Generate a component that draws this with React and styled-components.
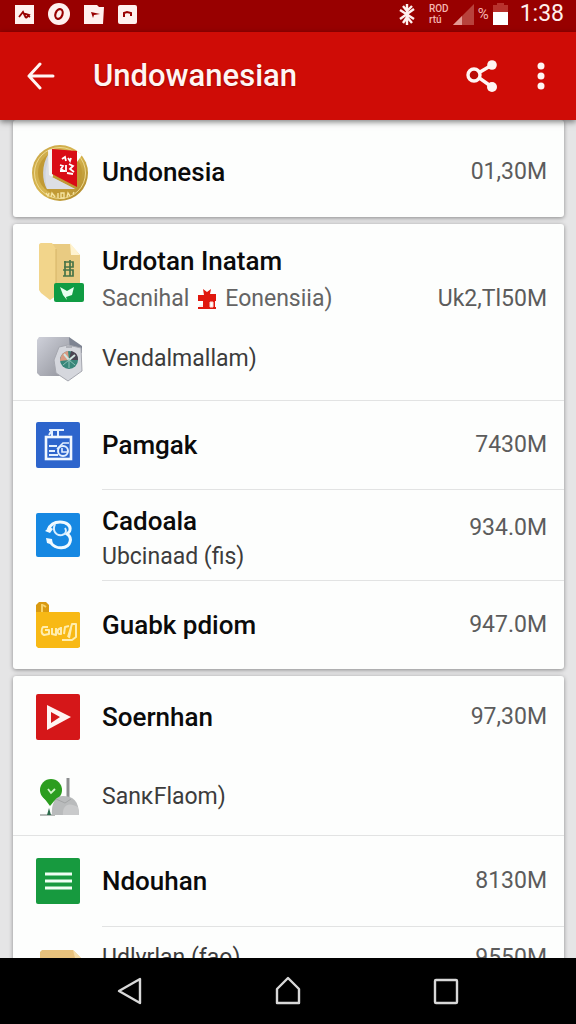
import React from "react";
import styled, { createGlobalStyle } from "styled-components";

const GlobalStyle = createGlobalStyle`
  * {
    box-sizing: border-box;
  }
  body {
    margin: 0;
    background: #e5e5e6;
    font-family: Roboto, "Noto Sans", sans-serif;
  }
  button {
    display: flex;
    align-items: center;
    justify-content: center;
    padding: 0;
    border: 0;
    background: none;
    cursor: pointer;
  }
  svg {
    display: block;
  }
`;

const Screen = styled.div`
  display: flex;
  flex-direction: column;
  height: 100vh;
  overflow: hidden;
`;

const StatusBar = styled.div`
  display: flex;
  flex: none;
  align-items: center;
  justify-content: space-between;
  height: 32px;
  padding: 0 12px 4px 14px;
  background: #980000;
  color: #ffeeec;
`;

const StatusGroup = styled.div`
  display: flex;
  align-items: center;
  gap: ${(props) => props.$gap}px;
`;

const Carrier = styled.div`
  margin-left: 8px;
  font-size: 10px;
  font-weight: 500;
  line-height: 11px;
  color: #f3b5b0;
`;

const Percent = styled.span`
  font-size: 15px;
  color: #f3b5b0;
`;

const Clock = styled.time`
  margin-left: 8px;
  font-size: 23px;
  line-height: 28px;
`;

const AppBar = styled.header`
  display: flex;
  flex: none;
  align-items: center;
  height: 88px;
  padding: 0 14px 0 20px;
  background: #cf0c06;
  color: #fff5f3;
  box-shadow: 0 2px 6px rgba(0, 0, 0, 0.5);
  z-index: 1;
`;

const BarButton = styled.button`
  width: ${(props) => props.$width}px;
  height: 48px;
  color: inherit;
`;

const Title = styled.h1`
  flex: 1;
  margin: 0 0 0 31px;
  font-size: 31px;
  font-weight: 500;
  line-height: 40px;
  text-shadow: 0 1px 2px rgba(90, 0, 0, 0.5);
`;

const Content = styled.main`
  flex: 1;
  min-height: 0;
  padding: 0 12px 0 13px;
  overflow: hidden;
`;

const Card = styled.section`
  margin-bottom: 7px;
  border-radius: 3px;
  background: #fdfefd;
  box-shadow: 0 1px 4px rgba(0, 0, 0, 0.4);
`;

const Row = styled.div`
  display: grid;
  grid-template-columns: 67px 1fr auto;
  align-items: ${(props) => (props.$top ? "start" : "center")};
  height: ${(props) => props.$height}px;
  padding: ${(props) => props.$top || 0}px 17px 0 22px;
`;

const Divider = styled.hr`
  height: 1px;
  margin: 0 0 0 ${(props) => (props.$inset ? 89 : 0)}px;
  border: 0;
  background: #e2e3e3;
`;

const TwoLines = styled.div`
  padding-top: ${(props) => props.$top || 0}px;
`;

const Name = styled.div`
  font-size: 26px;
  font-weight: 500;
  line-height: ${(props) => props.$line || 38}px;
  color: #0b0b0b;
  white-space: nowrap;
`;

const Detail = styled.div`
  display: flex;
  align-items: center;
  gap: 8px;
  font-size: 23px;
  line-height: ${(props) => props.$line || 38}px;
  color: ${(props) => (props.$dark ? "#3c3c3c" : "#646464")};
  white-space: nowrap;
`;

const Amount = styled.div`
  align-self: ${(props) => props.$align || "center"};
  font-size: 23px;
  line-height: ${(props) => props.$line || 38}px;
  color: #5c5c5c;
`;

const Medal = styled.svg`
  margin-left: -4px;
`;

const NavBar = styled.nav`
  display: flex;
  flex: none;
  justify-content: center;
  height: 66px;
  background: #000;
  z-index: 1;
`;

const NavButton = styled.button`
  flex: 1;
  max-width: 158px;
`;

const MedalIcon = () => (
  <Medal width="58" height="60" viewBox="0 0 58 60">
    <defs>
      <linearGradient id="gold" x1="0" y1="0" x2="1" y2="1">
        <stop offset="0" stopColor="#c9a648" />
        <stop offset="0.5" stopColor="#d8b64f" />
        <stop offset="1" stopColor="#a98225" />
      </linearGradient>
    </defs>
    <circle cx="29" cy="30" r="28" fill="url(#gold)" />
    <circle cx="29" cy="30" r="25.500" fill="none" stroke="#eed98f" />
    <circle cx="29" cy="30" r="22" fill="#c19a35" />
    <path d="M18 10C10 22 11 38 16 46h28L20 34z" fill="#cfd3dc" />
    <path d="M18 7l3 1v26l23 12H16c-2-8-2-18 0-24z" fill="#dcdee4" />
    <path d="M17 7l5-1v28l-4-2z" fill="#f7f4f3" />
    <path d="M21 6l25 2v36L21 31z" fill="#d90c16" />
    <path d="M46 8l5 4-5 7z" fill="#fff" />
    <path
      d="M31 16l3-2 1 4M37 15l2 3 1-3M29 22l3 1-2 3 3 2M35 22v7M38 21l4 2-3 3 4 3M29 28h5M36 30l6 1"
      fill="none"
      stroke="#fff"
      strokeWidth="1.800"
    />
    <path
      d="M15 50l2 3 1-3M20 54l1-4 3 4M27 50v5M30 50h3v5h-3zM36 54l1-4 2 3M42 51l1-2"
      fill="none"
      stroke="#f5e3a0"
      strokeWidth="1.400"
    />
  </Medal>
);

const FolderIcon = () => (
  <svg width="50" height="60" viewBox="0 0 50 60">
    <path d="M6 2h29l10 11v36H6z" fill="#e9cb82" />
    <path d="M4 3c0-1 1-2 2-2h11l4 6v47l-6 4-9-7-2-3z" fill="#f2d58b" />
    <path d="M21 7v44" stroke="#d6b467" />
    <path d="M35 1l10 12H36z" fill="#fff3cf" />
    <path
      d="M30 19v15M35 18v16M29 20h9v5h-9M28 28h10v6h-10"
      fill="none"
      stroke="#477448"
      strokeWidth="1.700"
    />
    <rect x="19" y="41" width="30" height="19" rx="2" fill="#109c43" />
    <path d="M25 45l7 4 7-4-2 8-6 2 1 3-4-5z" fill="#e8fff0" />
  </svg>
);

const ShieldIcon = () => (
  <svg width="48" height="46" viewBox="0 0 48 46">
    <defs>
      <linearGradient id="silver" x1="0" y1="0" x2="1" y2="1">
        <stop offset="0" stopColor="#cfd1da" />
        <stop offset="1" stopColor="#8e9098" />
      </linearGradient>
    </defs>
    <path d="M4 1h30l3 5v34H5l-3-3V4z" fill="url(#silver)" />
    <path d="M34 1l13 9v7H35z" fill="#7e8492" />
    <path d="M24 11l9-2 13 3 1 23-14 10-12-8-2-13z" fill="#d5d7dd" stroke="#a5a7af" />
    <circle cx="34" cy="24" r="9" fill="#39877a" />
    <path d="M34 24l-9 1c0-5 3-9 8-10z" fill="#d99a82" />
    <path d="M34 24l2-9c5 1 7 4 7 9z" fill="#4b4453" />
    <path d="M29 18l5 6 6-5" fill="none" stroke="#cfe5df" strokeWidth="2" />
    <path d="M34 23v9M28 29l6-5 6 5" fill="none" stroke="#8fc2b7" />
    <path d="M31 11h6" stroke="#8a8c94" />
  </svg>
);

const CaseIcon = () => (
  <svg width="46" height="48" viewBox="0 0 46 48">
    <rect x="1" y="1" width="44" height="46" rx="2" fill="#2d65cc" />
    <path d="M14 9h15M17 9v7M23 9v7M14 14l3-5" fill="none" stroke="#e3f0ff" strokeWidth="2" />
    <rect x="11" y="16" width="25" height="22" fill="none" stroke="#f1f8ff" strokeWidth="2.600" />
    <path d="M14 25h8M14 30h6M14 34h9" stroke="#e3f0ff" strokeWidth="2" />
    <circle cx="28" cy="30" r="5" fill="none" stroke="#e3f0ff" strokeWidth="2" />
    <path d="M22 28l6-6h6M27 27v4h5" fill="none" stroke="#e3f0ff" strokeWidth="1.600" />
  </svg>
);

const SyncIcon = () => (
  <svg width="46" height="46" viewBox="0 0 46 46">
    <rect x="1" y="1" width="44" height="44" rx="2" fill="#1688e2" />
    <path
      d="M13 18c2-5 6-8 12-8 7 0 11 4 10 8 0 2-2 3-3 4 3 2 4 5 3 8-2 7-14 8-19 1"
      fill="none"
      stroke="#f0faff"
      strokeWidth="3"
    />
    <path d="M20 12c-3 7 1 12 7 11 4-1 5-4 3-7" fill="none" stroke="#d9efff" strokeWidth="2" />
    <path d="M10 19l5-4 3 2-3 4zM11 26l6 1 1 6-6-2z" fill="#f0faff" />
  </svg>
);

const YellowFolderIcon = () => (
  <svg width="46" height="48" viewBox="0 0 46 48">
    <path d="M1 13V4l3-3h7l3 3v9z" fill="#d99a12" />
    <path d="M7 3v8M8 4l3 2" stroke="#f8d36a" strokeWidth="2" />
    <path d="M1 11h43l1 1v34l-2 1H3l-2-2z" fill="#f8b915" />
    <path
      d="M13 26H8c-2 2-2 7 1 8l5-1v-4h-4M17 27v6l4 1V27M26 27c-5 1-4 7 0 6v-7M29 33l1-7 4-1M33 36l4-13h4v13l-4 3H27M36 27l-2 10"
      fill="none"
      stroke="#ffedae"
      strokeWidth="2"
      strokeLinejoin="round"
    />
  </svg>
);

const PlayIcon = () => (
  <svg width="46" height="48" viewBox="0 0 46 48">
    <rect x="1" y="1" width="44" height="46" rx="2" fill="#d51719" />
    <path d="M12 12l24 12-24 13zM16 19v11l9-6z" fill="#fff4f2" fillRule="evenodd" />
  </svg>
);

const TreeIcon = () => (
  <svg width="46" height="40" viewBox="0 0 46 40">
    <path d="M5 38h15" stroke="#b6bab8" strokeWidth="2" />
    <path d="M14 31l2 7h-4z" fill="#2b6b4b" />
    <circle cx="16" cy="13" r="11" fill="#2c9d1f" />
    <path d="M6 17l9 12 10-12z" fill="#2c9d1f" />
    <path d="M13 12l3 4 4-4" fill="none" stroke="#d3f5ca" strokeWidth="1.800" />
    <path d="M33 1v19" stroke="#8d8f90" strokeWidth="3" />
    <path d="M17 38c-1-11 3-19 11-19 10 0 16 5 16 19z" fill="#b9bbbc" />
    <path d="M28 38c-1-9 5-14 15-8l1 8z" fill="#c9cacb" />
    <path d="M21 22l9 4 6-4" fill="none" stroke="#a3a5a6" />
  </svg>
);

const ListIcon = () => (
  <svg width="46" height="48" viewBox="0 0 46 48">
    <rect x="1" y="1" width="44" height="46" rx="2" fill="#179a3f" />
    <path d="M10 17h27M10 24h27M10 31h27" stroke="#effff3" strokeWidth="3" />
  </svg>
);

const FileIcon = () => (
  <svg width="48" height="60" viewBox="0 0 48 60">
    <path d="M5 13l2-2h31l8 8v36H5z" fill="#e8c27d" />
    <path d="M38 11l8 8h-6z" fill="#f4dca8" />
  </svg>
);

const CrossIcon = () => (
  <svg width="20" height="22" viewBox="0 0 20 22">
    <path d="M6 1l4 3 4-3-1 5h6v7h-1v6h1v2H1v-2h5v-6H1V7h6z" fill="#e0180e" />
    <path d="M13 14h3v5h-3zM2 18h4" fill="#fff" stroke="#ffd9d4" />
  </svg>
);

const App = () => (
  <Screen>
    <GlobalStyle />
    <StatusBar>
      <StatusGroup $gap={13}>
        <svg width="21" height="21" viewBox="0 0 21 21">
          <path d="M1 1h19v19H1z" fill="#fff1ef" />
          <path d="M5 13l4-5 3 6M9 9l6 2-3 3M13 11l3 2" fill="none" stroke="#980000" strokeWidth="1.800" />
        </svg>
        <svg width="22" height="22" viewBox="0 0 22 22">
          <circle cx="11" cy="11" r="11" fill="#fff1ef" />
          <ellipse cx="11" cy="11" rx="3.500" ry="5" fill="none" stroke="#980000" strokeWidth="2.200" transform="rotate(20 11 11)" />
        </svg>
        <svg width="21" height="21" viewBox="0 0 21 21">
          <path d="M1 1h13l2 2h5l-1 17H1z" fill="#fff1ef" />
          <path d="M8 8l9 2-6 1-1 3z" fill="#980000" />
        </svg>
        <svg width="21" height="21" viewBox="0 0 21 21">
          <rect x="1" y="1" width="19" height="19" rx="2" fill="#fff1ef" />
          <path d="M7 13V9l3-1 4 1v3" fill="none" stroke="#980000" strokeWidth="2" />
        </svg>
      </StatusGroup>
      <StatusGroup $gap={4}>
        <svg width="19" height="23" viewBox="0 0 19 23">
          <path
            d="M9 1v21M2 7l14 9M2 16L16 6M5 3l4 5 5-5M5 20l4-6 5 6"
            fill="none"
            stroke="#fff1ef"
            strokeWidth="2.400"
          />
        </svg>
        <Carrier>
          ROD
          <br />
          rtú
        </Carrier>
        <svg width="21" height="21" viewBox="0 0 21 21">
          <path d="M21 0v21H0z" fill="#b8423c" />
          <path d="M9 12v9H0z" fill="#e39a94" />
        </svg>
        <Percent>%</Percent>
        <svg width="15" height="22" viewBox="0 0 15 22">
          <path d="M4 0h7v2h4v8H0V2h4z" fill="#b8322d" />
          <path d="M0 9h15v13H0z" fill="#fff" />
        </svg>
        <Clock>1:38</Clock>
      </StatusGroup>
    </StatusBar>

    <AppBar>
      <BarButton $width={42} aria-label="Back">
        <svg width="28" height="28" viewBox="0 0 28 28">
          <path
            d="M13 2L2 14l11 12M2 14h24"
            fill="none"
            stroke="currentColor"
            strokeWidth="3"
            strokeLinecap="round"
            strokeLinejoin="round"
          />
        </svg>
      </BarButton>
      <Title>Undowanesian</Title>
      <BarButton $width={76} aria-label="Share">
        <svg width="32" height="34" viewBox="0 0 32 34">
          <path d="M26 6L9 16l17 12" fill="none" stroke="currentColor" strokeWidth="3.400" />
          <circle cx="8" cy="16" r="6" fill="#b90b06" stroke="currentColor" strokeWidth="3.400" />
          <circle cx="26" cy="6" r="4.800" fill="currentColor" />
          <circle cx="26" cy="28" r="5" fill="currentColor" />
        </svg>
      </BarButton>
      <BarButton $width={42} aria-label="More options">
        <svg width="8" height="28" viewBox="0 0 8 28">
          <circle cx="4" cy="4" r="3.500" fill="currentColor" />
          <circle cx="4" cy="14" r="3.500" fill="currentColor" />
          <circle cx="4" cy="24" r="3.500" fill="currentColor" />
        </svg>
      </BarButton>
    </AppBar>

    <Content>
      <Card>
        <Row $height={97} $top={23}>
          <MedalIcon />
          <Name $line={58}>Undonesia</Name>
          <Amount $align="start" $line={58}>
            01,30M
          </Amount>
        </Row>
      </Card>

      <Card>
        <Row $height={94} $top={18}>
          <FolderIcon />
          <TwoLines>
            <Name>Urdotan Inatam</Name>
            <Detail>
              Sacnihal <CrossIcon /> Eonensiia)
            </Detail>
          </TwoLines>
          <Amount $align="end">Uk2,Tl50M</Amount>
        </Row>
        <Row $height={82}>
          <ShieldIcon />
          <Detail $dark>Vendalmallam)</Detail>
        </Row>
        <Divider />
        <Row $height={88}>
          <CaseIcon />
          <Name>Pamgak</Name>
          <Amount>7430M</Amount>
        </Row>
        <Divider $inset />
        <Row $height={90}>
          <SyncIcon />
          <TwoLines $top={8}>
            <Name $line={36}>Cadoala</Name>
            <Detail $dark $line={36}>
              Ubcinaad (fis)
            </Detail>
          </TwoLines>
          <Amount $align="start" $line={76}>
            934.0M
          </Amount>
        </Row>
        <Divider $inset />
        <Row $height={88}>
          <YellowFolderIcon />
          <Name>Guabk pdiom</Name>
          <Amount>947.0M</Amount>
        </Row>
      </Card>

      <Card>
        <Row $height={82}>
          <PlayIcon />
          <Name>Soernhan</Name>
          <Amount>97,30M</Amount>
        </Row>
        <Row $height={77}>
          <TreeIcon />
          <Detail $dark>SanĸFlaom)</Detail>
        </Row>
        <Divider />
        <Row $height={90}>
          <ListIcon />
          <Name>Ndouhan</Name>
          <Amount>8130M</Amount>
        </Row>
        <Divider $inset />
        <Row $height={88} $top={12}>
          <FileIcon />
          <Detail $dark>Udlvrlan (fao)</Detail>
          <Amount $align="start">9550M</Amount>
        </Row>
      </Card>
    </Content>

    <NavBar>
      <NavButton aria-label="Back">
        <svg width="28" height="30" viewBox="0 0 28 30">
          <path d="M24 3v24L3 15z" fill="none" stroke="#d8d8d8" strokeWidth="2.400" strokeLinejoin="round" />
        </svg>
      </NavButton>
      <NavButton aria-label="Home">
        <svg width="28" height="30" viewBox="0 0 28 30">
          <path d="M3 27V13L14 2l11 11v14z" fill="none" stroke="#d8d8d8" strokeWidth="2.400" strokeLinejoin="round" />
        </svg>
      </NavButton>
      <NavButton aria-label="Recent apps">
        <svg width="26" height="28" viewBox="0 0 26 28">
          <rect x="2" y="3" width="22" height="23" rx="1" fill="none" stroke="#d8d8d8" strokeWidth="2.400" />
        </svg>
      </NavButton>
    </NavBar>
  </Screen>
);

export default App;
